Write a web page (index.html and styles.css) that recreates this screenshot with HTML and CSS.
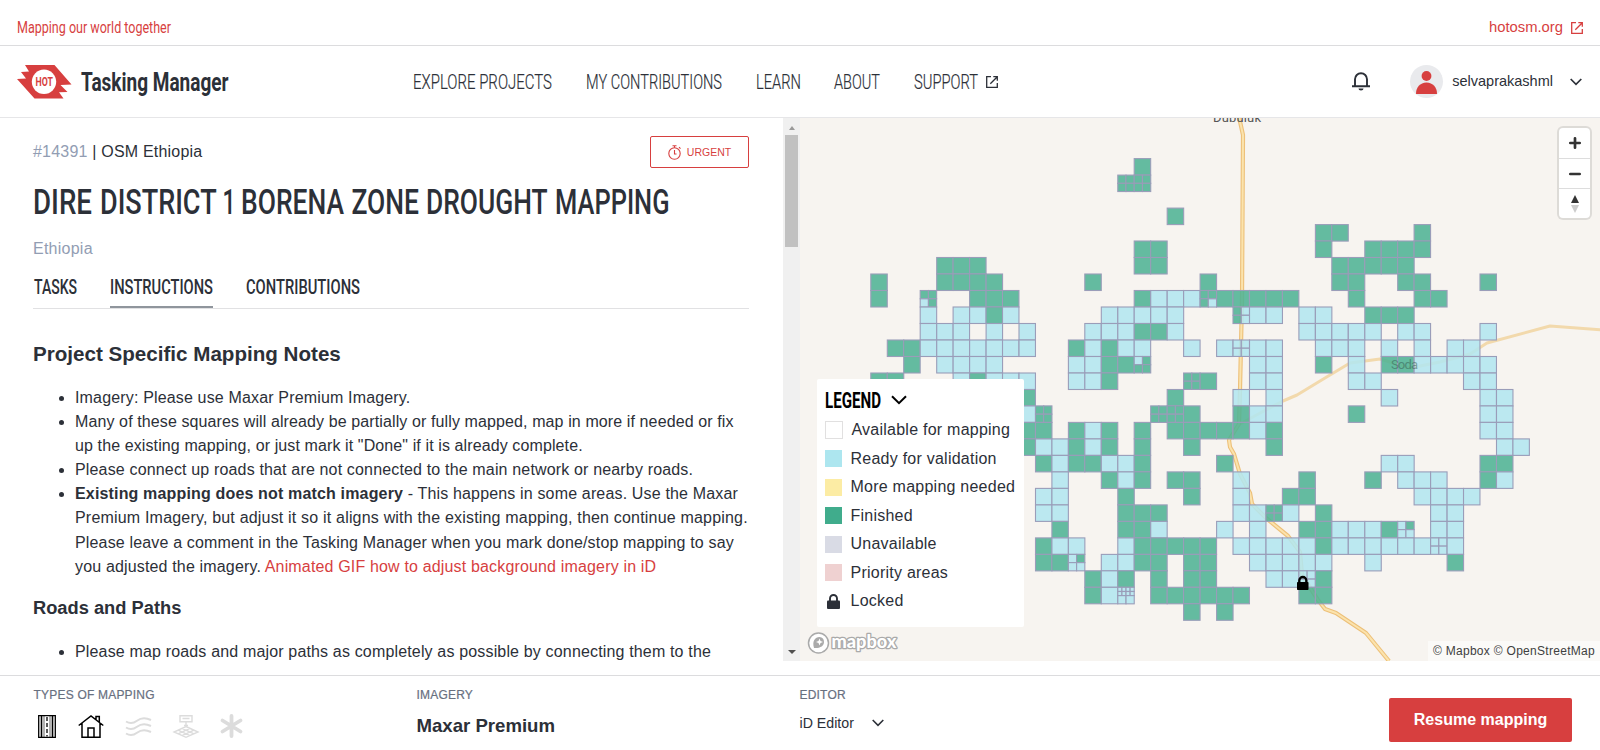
FILE: index.html
```html
<!DOCTYPE html>
<html lang="en">
<head>
<meta charset="utf-8">
<title>Tasking Manager</title>
<link rel="stylesheet" href="styles.css">
</head>
<body>
<div class="topbar">
  <svg class="cond c-red" width="160" height="24"><text x="1" y="17.500" font-size="16" textLength="154" lengthAdjust="spacingAndGlyphs">Mapping our world together</text></svg>
  <a class="org"><span>hotosm.org</span>
    <svg width="12" height="12" viewBox="0 0 12 12" fill="none" stroke="currentColor" stroke-width="1.3"><path d="M5 .7H.7v10.6h10.6V7"/><path d="M7.3.7h4v4M11.3.7 4.3 7.7"/></svg></a>
</div>
<header class="header">
  <div class="brand">
    <svg width="55" height="34" viewBox="0 0 55 34"><path fill="#d73f3f" d="M8 0H37.500L54.500 19.500 43.500 20 50.500 27 42 27.200 46.500 33.500H17.500L0 14 9 13.500 4 7 12 6.500Z"/><circle cx="27" cy="16.800" r="12.200" fill="#fff"/><text x="18.500" y="21" font-family="Roboto" font-weight="700" font-size="12" textLength="17.400" lengthAdjust="spacingAndGlyphs" fill="#d73f3f">HOT</text></svg>
    <svg class="cond c-dark" width="150" height="34"><text x="0" y="25.700" font-size="25.200" font-weight="700" textLength="147.500" lengthAdjust="spacingAndGlyphs">Tasking Manager</text></svg>
  </div>
  <nav class="nav">
    <svg class="cond c-dark" width="140" height="30"><text x="0" y="22" font-size="21" textLength="139" lengthAdjust="spacingAndGlyphs">EXPLORE PROJECTS</text></svg>
    <svg class="cond c-dark" width="137" height="30"><text x="0" y="22" font-size="21" textLength="136" lengthAdjust="spacingAndGlyphs">MY CONTRIBUTIONS</text></svg>
    <svg class="cond c-dark" width="45" height="30"><text x="0" y="22" font-size="21" textLength="45" lengthAdjust="spacingAndGlyphs">LEARN</text></svg>
    <svg class="cond c-dark" width="46" height="30"><text x="0" y="22" font-size="21" textLength="46" lengthAdjust="spacingAndGlyphs">ABOUT</text></svg>
    <span class="support"><svg class="cond c-dark" width="65" height="30"><text x="1" y="22" font-size="21" textLength="64" lengthAdjust="spacingAndGlyphs">SUPPORT</text></svg>
    <svg width="12" height="12" viewBox="0 0 12 12" fill="none" stroke="#2c3038" stroke-width="1.3"><path d="M5 .7H.7v10.600h10.600V7"/><path d="M7.300.7h4v4M11.300.7 4.300 7.700"/></svg></span>
  </nav>
  <div class="user">
    <svg class="bell" width="18" height="19" viewBox="0 0 18 19"><path d="M3 14V7.200a6 6 0 0 1 12 0V14M0 14.200H18" fill="none" stroke="#2c3038" stroke-width="1.900"/><path d="M6.500 16.500h5a2.500 2 0 0 1-5 0Z" fill="#2c3038"/></svg>
    <svg class="avatar" width="33" height="33" viewBox="0 0 33 33"><circle cx="16.500" cy="16.500" r="16.500" fill="#e9eaed"/><circle cx="16.500" cy="11" r="4.900" fill="#d73f3f"/><path d="M6 28.500c0-6 4-11 10.500-11s10.500 5 10.500 11q0 .5-.5.5h-20q-.5 0-.5-.5Z" fill="#d73f3f"/></svg>
    <span class="username">selvaprakashml</span>
    <svg width="12" height="8" viewBox="0 0 12 8" fill="none" stroke="#2c3038" stroke-width="1.700"><path d="M.7 1 6 6.300 11.300 1"/></svg>
  </div>
</header>
<main class="main">
  <section class="panel">
    <div class="content">
      <div class="idrow"><span class="id"><span class="muted">#14391</span> | OSM Ethiopia</span>
        <span class="urgent"><svg width="14" height="15" viewBox="0 0 14 15" fill="none" stroke="#d73f3f" stroke-width="1.100"><circle cx="6.500" cy="8.500" r="5.700"/><path d="M6.500 5v4h2M4.500.7h4M6.500.7v2M11 2.200l1.500 1.500"/></svg><span>URGENT</span></span></div>
      <svg class="cond c-dark title" width="640" height="44"><text y="33.500" font-size="35.800" font-weight="500"><tspan x="0" textLength="59" lengthAdjust="spacingAndGlyphs">DIRE</tspan> <tspan x="67" textLength="116" lengthAdjust="spacingAndGlyphs">DISTRICT</tspan> <tspan x="189.500" textLength="13" lengthAdjust="spacingAndGlyphs">1</tspan> <tspan x="208" textLength="103" lengthAdjust="spacingAndGlyphs">BORENA</tspan> <tspan x="318.500" textLength="67.500" lengthAdjust="spacingAndGlyphs">ZONE</tspan> <tspan x="393" textLength="121" lengthAdjust="spacingAndGlyphs">DROUGHT</tspan> <tspan x="522" textLength="114.500" lengthAdjust="spacingAndGlyphs">MAPPING</tspan></text></svg>
      <div class="country muted">Ethiopia</div>
      <div class="tabs">
        <span class="tab"><svg class="cond c-dark" width="43" height="28"><text x="0" y="23" font-size="21" font-weight="500" textLength="43" lengthAdjust="spacingAndGlyphs">TASKS</text></svg></span>
        <span class="tab active"><svg class="cond c-dark" width="103" height="28"><text x="0" y="23" font-size="21" font-weight="500" textLength="103" lengthAdjust="spacingAndGlyphs">INSTRUCTIONS</text></svg></span>
        <span class="tab"><svg class="cond c-dark" width="114" height="28"><text x="0" y="23" font-size="21" font-weight="500" textLength="114" lengthAdjust="spacingAndGlyphs">CONTRIBUTIONS</text></svg></span>
      </div>
      <h3 class="h-notes">Project Specific Mapping Notes</h3>
      <ul class="list">
        <li>Imagery: Please use Maxar Premium Imagery.</li>
        <li class="tight">Many of these squares will already be partially or fully mapped, map in more if needed or fix<br>up the existing mapping, or just mark it "Done" if it is already complete.</li>
        <li>Please connect up roads that are not connected to the main network or nearby roads.</li>
        <li><b>Existing mapping does not match imagery</b> - This happens in some areas. Use the Maxar<br><span class="wide">Premium Imagery, but adjust it so it aligns with the existing mapping, then continue mapping.</span><br>Please leave a comment in the Tasking Manager when you mark done/stop mapping to say<br>you adjusted the imagery. <a class="c-link">Animated GIF how to adjust background imagery in iD</a></li>
      </ul>
      <h4 class="h-roads">Roads and Paths</h4>
      <ul class="list last">
        <li>Please map roads and major paths as completely as possible by connecting them to the</li>
      </ul>
    </div>
    <div class="scrollbar"><i class="up"></i><i class="thumb"></i><i class="down"></i></div>
  </section>
  <section class="map">
    <svg id="tiles" width="800" height="543" viewBox="800 118 800 543"></svg>
    <div class="legend">
      <div class="legend-title"><svg class="cond" width="57" height="26"><text x="0" y="20.500" font-size="21.500" font-weight="700" textLength="56" lengthAdjust="spacingAndGlyphs">LEGEND</text></svg>
        <svg width="16" height="10" viewBox="0 0 16 10" fill="none" stroke="#000" stroke-width="2"><path d="M1 1.200 8 8.200 15 1.200"/></svg></div>
      <div class="row"><i class="sw outline"></i>Available for mapping</div>
      <div class="row"><i class="sw ready"></i>Ready for validation</div>
      <div class="row"><i class="sw more"></i>More mapping needed</div>
      <div class="row"><i class="sw done"></i>Finished</div>
      <div class="row"><i class="sw unavail"></i>Unavailable</div>
      <div class="row"><i class="sw prio"></i>Priority areas</div>
      <div class="row"><svg class="lockic" width="13" height="15" viewBox="0 0 13 15"><path d="M3 7V4.500a3.500 3.500 0 0 1 7 0V7" fill="none" stroke="#2c3038" stroke-width="1.900"/><rect y="6.500" width="13" height="8.500" rx="1" fill="#2c3038"/></svg>Locked</div>
    </div>
    <div class="controls"><div><svg width="12" height="12" viewBox="0 0 12 12"><path d="M6 1.300v9.400M1.300 6h9.400" stroke="#333" stroke-width="2.700" stroke-linecap="round"/></svg></div><div><svg width="12" height="12" viewBox="0 0 12 12"><path d="M1.300 6h9.400" stroke="#333" stroke-width="2.700" stroke-linecap="round"/></svg></div><div><svg width="8" height="18" viewBox="0 0 8 18"><path d="M4 0 8 8H0Z" fill="#333"/><path d="M4 18 0 10h8Z" fill="#ccc"/></svg></div></div>
    <svg class="mapbox" width="94" height="24" viewBox="0 0 94 24"><circle cx="11.500" cy="12" r="10" fill="#fff" stroke="#aaa" stroke-width="1.500"/><path d="M7 17c-2-7 1-11 5.500-11a5 5 0 0 1 4.500 5c0 4-4 6.500-10 6Z" fill="#aaa"/><path d="m12.500 7.500 1 2.500 2.500 1-2.500 1-1 2.500-1-2.500-2.500-1 2.500-1Z" fill="#fff"/><text x="24.500" y="17" font-family="Lato" font-weight="900" font-size="18" textLength="65" lengthAdjust="spacingAndGlyphs" fill="#fff" stroke="#aaa" stroke-width="2.600" stroke-linejoin="round" paint-order="stroke">mapbox</text></svg>
    <div class="attrib">© Mapbox © OpenStreetMap</div>
  </section>
</main>
<footer class="footer">
  <div class="fcol types"><div class="label">TYPES OF MAPPING</div>
    <div class="icons">
      <svg class="road" width="18" height="23" viewBox="0 0 18 23" fill="none" stroke="#000"><path stroke-width="1.300" d="M.7.7H17.300V22.300H.7Z"/><path d="M3.500 1v21M14.500 1v21" stroke-width="1.600"/><path d="M6 1v21M12 1v21" stroke-width=".6"/><path d="M9 2v19.500" stroke-width="1.300" stroke-dasharray="4 2"/></svg>
      <svg width="26" height="23" viewBox="0 0 26 23" fill="none" stroke="#000" stroke-width="1.500"><path d="M.7 10.500 13 1 25.300 10.500M4 8.300V22.200H22V8.300M18 4.700V1.500h3.300v6M10 22V13h6v9"/></svg>
      <svg width="27" height="19" viewBox="0 0 27 19" fill="none" stroke="#dcdcdc" stroke-width="2"><path d="M1 4.500c5 3 8 1.500 11-.8s7-4 14-.7M1 10.500c5 3 8 1.500 11-.8s7-4 14-.7M1 16.500c5 3 8 1.500 11-.8s7-4 14-.7"/></svg>
      <svg width="26" height="23" viewBox="0 0 26 23" fill="none" stroke="#dcdcdc" stroke-width="1.400"><path d="M7 .8h12v6H7ZM9.500 3.500h7M13 7v4M11 10.500h4"/><path d="M13 11.500 25 17 13 22.300 1 17ZM9 13.300l12 5.500M5 15.200l12 5.500M17 13.300 5 18.800M21 15.200 9 20.700"/></svg>
      <svg width="23" height="24" viewBox="0 0 23 24" stroke="#dcdcdc" stroke-width="3.800" stroke-linecap="round"><path d="M11.500 2v20M2.500 6.500l18 11M20.500 6.500l-18 11"/></svg>
    </div></div>
  <div class="fcol imagery"><div class="label">IMAGERY</div><div class="imgname">Maxar Premium</div></div>
  <div class="fcol editor"><div class="label">EDITOR</div><div class="edname"><span>iD Editor</span><svg width="12" height="8" viewBox="0 0 12 8" fill="none" stroke="#2c3038" stroke-width="1.600"><path d="M.7 1 6 6.300 11.300 1"/></svg></div></div>
  <button class="resume">Resume mapping</button>
</footer>
<script src="map.js"></script>
</body>
</html>
```

FILE: styles.css
```css
* { box-sizing: border-box; }
body { margin: 0; width: 1600px; height: 750px; overflow: hidden; display: flex; flex-direction: column; font-family: "Liberation Sans", Arial, sans-serif; color: #2c3038; background: #fff; }
svg { display: block; flex: none; overflow: visible; }
.cond text { font-family: Roboto, sans-serif; }
.nav .cond text { font-weight: 300; stroke: #2c3038; stroke-width: .2px; }
.c-dark { fill: #2c3038; }
.c-red { fill: #d73f3f; }
.c-link { color: #d73f3f; }
.muted { color: #929db3; }
.topbar { height: 46px; flex: none; border-bottom: 1px solid #dcdcde; display: flex; justify-content: space-between; align-items: flex-start; padding: 15px 17px 0 16px; }
.org { display: flex; align-items: center; gap: 8px; color: #d73f3f; font-size: 14.8px; line-height: 24px; }
.org svg { margin-top: 1px; }
.header { height: 72px; flex: none; border-bottom: 1px solid #e6e6e8; display: flex; align-items: center; padding: 0 18px 0 17px; }
.brand { display: flex; align-items: center; gap: 8.5px; width: 396px; }
.nav { display: flex; align-items: center; gap: 33px; flex: 1; }
.support { display: flex; align-items: center; gap: 8px; }
.user { display: flex; align-items: center; }
.bell { margin-right: 40px; }
.username { font-size: 14.5px; margin: -1px 17px 0 9px; }
.main { height: 543px; flex: none; display: flex; }
.panel { width: 800px; display: flex; overflow: hidden; }
.content { width: 783px; padding: 18px 34px 0 33px; height: 543px; overflow: hidden; }
.idrow { display: flex; justify-content: space-between; height: 32px; align-items: center; }
.id { font-size: 16px; letter-spacing: .2px; }
.urgent { border: 1px solid #d73f3f; border-radius: 2px; width: 99px; height: 32px; display: flex; align-items: center; justify-content: center; gap: 5px; color: #d73f3f; font-size: 10.5px; }
.title { margin-top: 12px; }
.country { font-size: 16px; line-height: 20px; letter-spacing: .25px; margin-top: 15px; height: 20px; }
.tabs { display: flex; gap: 33px; border-bottom: 1px solid #e1e1e3; height: 39px; margin-top: 11px; align-items: flex-end; padding-left: .5px; }
.tab { height: 37px; border-bottom: 2px solid transparent; }
.tab.active { border-bottom-color: #8f959c; }
.h-notes { font-size: 20.600px; line-height: 26px; margin: 32px 0 0; }
.list { margin: 19px 0 0; padding: 0 0 0 42px; font-size: 16px; line-height: 24.100px; letter-spacing: .16px; white-space: nowrap; }
.list.last { margin-top: 20px; }
.tight { letter-spacing: .11px; }
.wide { letter-spacing: .19px; }
.h-roads { font-size: 18.300px; line-height: 24px; margin: 17px 0 0; }
.scrollbar { width: 17px; background: #f0f0f0; display: flex; flex-direction: column; align-items: center; }
.up { border: 3.500px solid transparent; border-top: 0; border-bottom: 4px solid #999; margin-top: 8px; }
.thumb { width: 13px; height: 112px; background: #c1c1c1; margin-top: 5px; margin-right: 1px; }
.down { border: 4px solid transparent; border-bottom: 0; border-top: 4px solid #505050; margin-top: auto; margin-bottom: 7px; }
.map { width: 800px; position: relative; background: #f7f4f0; overflow: hidden; }
.legend { position: absolute; left: 17px; top: 261px; width: 207px; height: 248px; background: #fff; border-radius: 2px; padding: 6px 8px; }
.legend-title { display: flex; align-items: center; gap: 9px; height: 30px; margin-bottom: 1px; }
.row { display: flex; align-items: center; gap: 8.500px; height: 28.500px; font-size: 16px; letter-spacing: .24px; white-space: nowrap; }
.sw { width: 17px; height: 17px; flex: none; }
.outline { width: 18px; height: 18px; border: 1.500px solid #e1e0e0; }
.ready { background: #ade6ef; }
.more { background: #fceca4; }
.done { background: #40ac8c; }
.unavail { background: #d9dbe5; }
.prio { background: #efd1d1; }
.lockic { margin: 0 2px; }
.controls { position: absolute; right: 10px; top: 10px; width: 31px; height: 90px; background: #fff; border-radius: 4px; box-shadow: 0 0 0 2px rgba(0,0,0,.1); }
.controls div { height: 30px; display: flex; align-items: center; justify-content: center; }
.controls div + div { border-top: 1px solid #ddd; }
.mapbox { position: absolute; left: 7px; bottom: 6px; }
.attrib { position: absolute; right: 0; bottom: 0; height: 20px; padding: 0 5px; background: rgba(255,255,255,.5); font-size: 12px; letter-spacing: .29px; line-height: 20px; color: #404040; }
.footer { margin-top: 14px; height: 75px; border-top: 1px solid #dcdcde; display: flex; padding-left: 33.5px; }
.fcol { width: 383px; padding-top: 12px; }
.label { font-size: 12px; line-height: 14px; letter-spacing: .2px; color: #68707f; -webkit-text-stroke: .2px #68707f; }
.icons { display: flex; align-items: center; margin: 12px 0 0 4px; height: 24px; gap: 21px; }
.road { margin-right: 1.5px; }
.imgname { font-size: 18.600px; font-weight: 700; margin-top: 12px; line-height: 24px; }
.edname { display: flex; align-items: center; gap: 18px; font-size: 14.200px; line-height: 20px; margin-top: 11px; }
.resume { margin: 22px 0 0 206.5px; width: 183px; height: 44px; background: #d73f3f; border: 0; border-radius: 2px; color: #fff; font: 700 16px "Liberation Sans", Arial, sans-serif; }
```

FILE: map.js
```javascript
// Task grid: G finished, B ready for validation. Each entry is a row of "column + states" runs.
const X0 = 870.8, Y0 = 158.6, W = 16.465, H = 16.49;
const GREEN = '#50b394', BLUE = '#b3e6ef', LINE = '#9a9db9';
// Lowercase keys are split squares, listed as top-left, top-right, bottom-left, bottom-right.
const SPLIT = { g: 'GGGG', b: 'BBBB', q: 'GGBG', r: 'GGGB', s: 'GBGB', t: 'BGGG', u: 'BGBB' };
const ROWS = [
  '16G', '15gg', '', '18G', '27GG 33G', '16GG 27G 30GGGG', '4GGG 16GG 28GGGGG',
  '0G 4GGGG 13G 20G 28GG 32GG 37G',
  '0G 3q 6GGG 16GBBBrGGGGG 29G 33GG',
  '3B 5BBGB 14BBBBB 22sBB 26BB 30GGG',
  '3BBB 7B 9B 13BBBGGB 26BBBBB 32BB 37B',
  '1GGBBBBBBB 12GBGBB 19B 21BbBB 27BBB 31B 33B 35BB',
  '2G 4BBBB 12BBGGt 23BB 27G 29B 31GGBBBBB',
  '0GG 5BGBBB 12BBG 19gG 23BB 29BB 36BB',
  '9G 18G 22B 24B 31B 37BB',
  '9Bg 17ggG 22GBB 29G 37BB',
  '9GG 12GBG 16G 18GGGGGBG 37BB',
  '9GBBGBG 16G 19G 24G 38BB',
  '10GBGGBBG 21G 31BB 37GG',
  '11B 14GBG 18GG 22B 26G 30G 32BBB 37GB',
  '10BB 15G 19G 22B 25GG 33BBBB',
  '10BB 15GGG 22BBgB 27G 34BB',
  '11G 15GGB 21B 23B 26GGBBBGu 34BB',
  '10GBB 15BGGGGG 22BBBBBGBBBBBBbB',
  '10GGu 14BBGG 19GG 23BBBBB 30B 35G',
  '13GBG 17G 19GG 24BBbG',
  '13GB 17GGGGGG 26GG',
  '19G 21G'
];
function cell(x, y, w, h, s) {
  return `<rect x="${x.toFixed(1)}" y="${y.toFixed(1)}" width="${w.toFixed(2)}" height="${h.toFixed(2)}" fill="${s === 'G' ? GREEN : BLUE}" fill-opacity=".88" stroke="${LINE}" stroke-width="1.1"/>`;
}
const NS = 'M1239 117 1243 135 1242 300 1240 390 1239 424 1229 440 1230 447 1234 454 1240 474 1250 493 1252 504 1266 518 1288 536 1300 552 1302 575 1318 600 1325 609 1336 613 1366 633 1389 661';
const EW = 'M1240 424 1262 412 1283 401 1297 395 1325 378 1350 363 1380 359 1410 368 1440 362 1470 354 1487 343 1550 326 1602 330';
let out = `
<g fill="none" stroke-linejoin="round">
<path d="${EW}" stroke="#f2d9ac" stroke-width="3"/>
<path d="${NS}" stroke="#edc079" stroke-width="4.200"/>
<path d="${NS}" stroke="#fbe3ad" stroke-width="2"/>
</g>
<text x="1213" y="122" font-family="Roboto" font-size="13" textLength="48" fill="#555">Dubuluk</text>`;
ROWS.forEach((row, r) => row.split(' ').filter(Boolean).forEach(run => {
  const m = run.match(/(\d+)(\D+)/);
  [...m[2]].forEach((s, i) => {
    const x = X0 + (+m[1] + i) * W, y = Y0 + r * H;
    if (SPLIT[s]) [...SPLIT[s]].forEach((q, k) => { out += cell(x + (k % 2) * W / 2, y + (k >> 1) * H / 2, W / 2, H / 2, q); });
    else out += cell(x, y, W, H, s);
  });
}));
// Square split twice along its upper half
const sx = X0 + 15 * W, sy = Y0 + 26 * H;
for (let k = 0; k < 8; k++) out += cell(sx + (k % 4) * W / 4, sy + (k >> 2) * H / 4, W / 4, H / 4, 'B');
for (let k = 0; k < 2; k++) out += cell(sx + k * W / 2, sy + H / 2, W / 2, H / 2, 'B');
out += `<text x="1391" y="369" font-family="Roboto" font-size="13" textLength="27" fill="#35584f" fill-opacity=".5">Soda</text>
<path d="M1299.300 583v-2.500a3.500 3.500 0 0 1 7 0v2.500" fill="none" stroke="#000" stroke-width="2.300"/><rect x="1297" y="582" width="11.500" height="8" rx=".8"/>`;
document.getElementById('tiles').innerHTML = out;
```
